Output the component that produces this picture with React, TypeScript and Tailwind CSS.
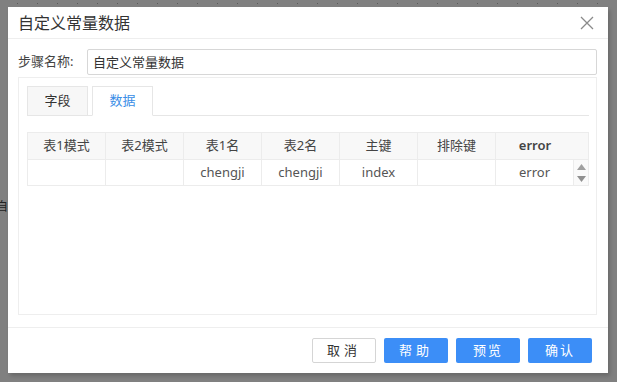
import React from 'react';

const cols = ['表1模式', '表2模式', '表1名', '表2名', '主键', '排除键'];
const row = ['', '', 'chengji', 'chengji', 'index', ''];

export default function App() {
  return (
    <div
      className="relative h-[382px] w-[617px] overflow-hidden bg-[#808080] pl-[8px] pt-[7px] text-[#333]"
      style={{ fontFamily: '"Noto Sans", "Noto Sans CJK SC", sans-serif' }}
    >
      {/* dotted guide line of the page behind */}
      <div className="absolute left-0 top-[3px] h-px w-full bg-[linear-gradient(to_right,#5a5a5a_1px,transparent_1px)] bg-[length:20px_1px] bg-[position:17px_0]" />
      {/* page text behind the dialog */}
      <span className="absolute left-[-4px] top-[198px] text-[12px] text-[#222]">自定义</span>

      <div className="relative z-10 flex h-[366px] w-[600px] flex-col bg-white shadow-[2px_3px_4px_rgba(0,0,0,0.18)]">
        {/* header */}
        <div className="flex h-[32px] items-center justify-between border-b border-[#eee] pl-[10px] pr-[14px]">
          <span className="text-[16px] text-[#333]">自定义常量数据</span>
          <svg width="14" height="14" viewBox="0 0 14 14" className="mt-[1px]">
            <path d="M1 1L13 13M13 1L1 13" stroke="#8a8a8a" strokeWidth="1.3" fill="none" />
          </svg>
        </div>

        {/* body */}
        <div className="flex flex-1 flex-col px-[10px] pt-[10px] pr-[11px]">
          <div className="flex items-center">
            <span className="w-[69px] text-[13px] text-[#444]">步骤名称:</span>
            <div className="flex h-[26px] flex-1 items-center rounded-[2px] border border-[#d7d7d7] pl-[5px] pt-[1px] text-[13px] text-[#333]">
              自定义常量数据
            </div>
          </div>

          <div className="mt-[2px] h-[238px] border border-[#eee] pl-[8px] pr-[7px] pt-[8px]">
            {/* tabs */}
            <div className="flex gap-[4px] border-b border-[#e6e6e6]">
              <div className="-mb-px flex h-[30px] w-[61px] items-center justify-center border border-[#e6e6e6] bg-[#f7f7f7] text-[13px] text-[#333]">
                字段
              </div>
              <div className="-mb-px flex h-[30px] w-[61px] items-center justify-center border border-b-white border-[#e6e6e6] bg-white text-[13px] text-[#3a8ee6]">
                数据
              </div>
            </div>

            {/* table */}
            <div className="mt-[16px] border border-[#ececec] text-[13px]">
              <div className="flex h-[26px] bg-[#f8f8f8]">
                {cols.map((c) => (
                  <div key={c} className="flex w-[78px] items-center justify-center border-r border-[#ececec] text-[#444]">
                    {c}
                  </div>
                ))}
                <div className="flex w-[78px] items-center justify-center font-semibold text-[#444]">error</div>
              </div>
              <div className="flex h-[26px] border-t border-[#ececec]">
                {row.map((c, i) => (
                  <div key={i} className="flex w-[78px] items-center justify-center border-r border-[#ececec] text-[#555]">
                    {c}
                  </div>
                ))}
                <div className="flex w-[78px] items-center justify-center border-r border-[#ececec] text-[#555]">error</div>
                <div className="flex flex-1 flex-col items-center justify-center gap-[6px] bg-[#fafafa]">
                  <svg width="9" height="6" viewBox="0 0 9 6">
                    <path d="M4.5 0L9 6H0Z" fill="#a0a0a0" />
                  </svg>
                  <svg width="9" height="6" viewBox="0 0 9 6">
                    <path d="M0 0H9L4.5 6Z" fill="#909090" />
                  </svg>
                </div>
              </div>
            </div>
          </div>
        </div>

        {/* footer */}
        <div className="flex h-[46px] items-center justify-end gap-[8px] border-t border-[#eee] pr-[16px]">
          <button className="h-[25px] w-[64px] rounded-[2px] border border-[#d5d5d5] bg-white text-[13px] tracking-[4px] text-[#333]">
            取消
          </button>
          <button className="h-[25px] w-[64px] rounded-[2px] bg-[#3c8ef7] text-[13px] tracking-[4px] text-white">
            帮助
          </button>
          <button className="h-[25px] w-[64px] rounded-[2px] bg-[#3c8ef7] text-[13px] tracking-[2px] text-white">
            预览
          </button>
          <button className="h-[25px] w-[64px] rounded-[2px] bg-[#3c8ef7] text-[13px] tracking-[2px] text-white">
            确认
          </button>
        </div>
      </div>
    </div>
  );
}
